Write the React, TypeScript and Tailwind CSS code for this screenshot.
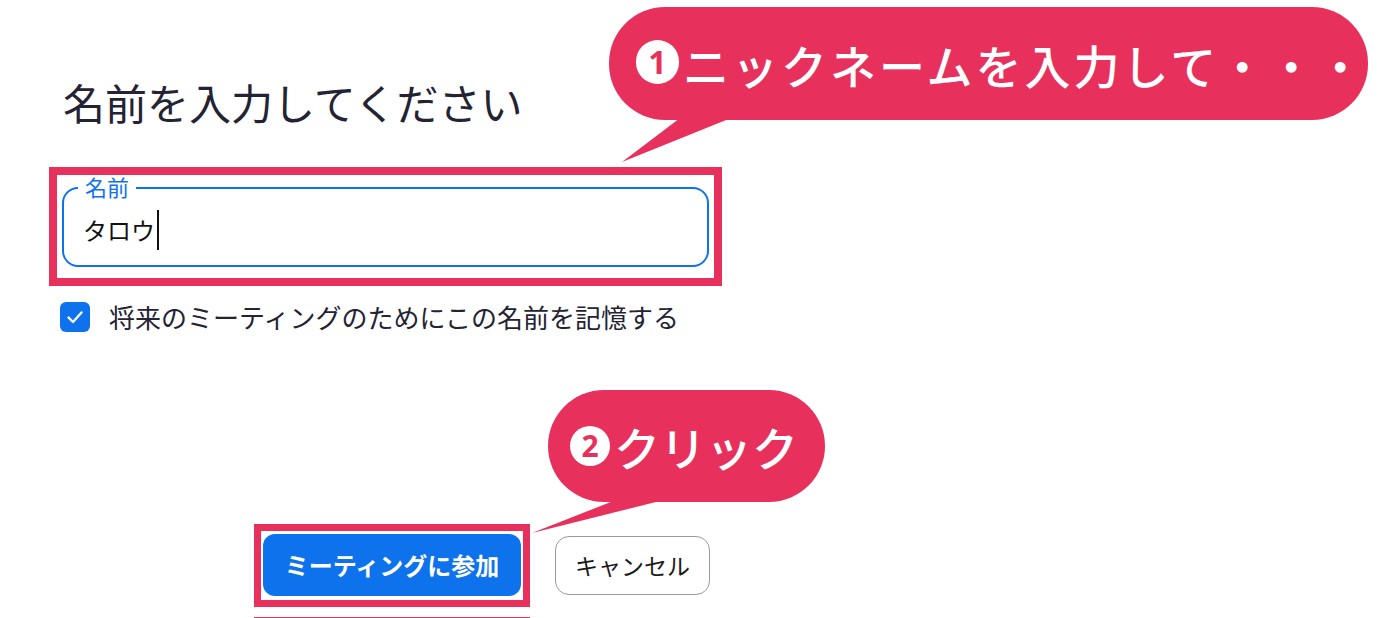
import React from "react";

const PINK = "#e8305c";

export default function App() {
  return (
    <div
      className="relative w-[1400px] h-[618px] overflow-hidden bg-white"
      style={{ fontFamily: '"Noto Sans CJK JP", "Noto Sans", sans-serif' }}
    >
      {/* main content flow */}
      <div className="flex flex-col pl-[49px] pt-[81px]">
        <h1 className="ml-[14px] text-[42px] leading-[42px] font-normal text-[#232333]">
          名前を入力してください
        </h1>

        {/* highlighted input */}
        <div className="mt-[44px] w-[673px] h-[119px] border-[8px] border-[#e8305c] px-[5px] pt-[12px]">
          <div className="relative h-[80px] rounded-[16px] border-2 border-[#0e72ed] flex items-center pl-[19px]">
            <span className="absolute left-[14px] top-[-14px] bg-white px-[7px] text-[22px] leading-[22px] text-[#0e72ed]">
              名前
            </span>
            <span className="mt-[6px] text-[24px] leading-[24px] text-[#111111]">タロウ</span>
            <span className="mt-[6px] ml-[2px] w-[1.5px] h-[40px] bg-[#111111]" />
          </div>
        </div>

        {/* remember checkbox */}
        <div className="mt-[16px] ml-[11px] flex items-center h-[30px]">
          <div className="w-[30px] h-[30px] rounded-[6px] bg-[#0e72ed] flex items-center justify-center">
            <svg width="30" height="30" viewBox="0 0 30 30">
              <polyline
                points="8.5,15.5 13,20 21.5,10.5"
                fill="none"
                stroke="white"
                strokeWidth="2.4"
                strokeLinecap="round"
                strokeLinejoin="round"
              />
            </svg>
          </div>
          <span className="ml-[19px] text-[26px] leading-[30px] text-[#232333]">
            将来のミーティングのためにこの名前を記憶する
          </span>
        </div>

        {/* buttons */}
        <div className="mt-[192px] ml-[205px] flex items-center">
          <div className="w-[276px] h-[83px] border-[7px] border-[#e8305c] pl-[2px] pt-[3px]">
            <button className="w-[258px] h-[62px] rounded-[12px] bg-[#0e72ed] text-white text-[24px] font-bold leading-[24px] flex items-center justify-center">
              ミーティングに参加
            </button>
          </div>
          <button className="ml-[25px] w-[155px] h-[59px] rounded-[14px] border-[1.5px] border-[#9a9a9a] bg-white text-[23px] leading-[23px] text-[#1a1a1a] flex items-center justify-center">
            キャンセル
          </button>
        </div>
        <div className="mt-[10px] ml-[205px] w-[276px] h-[2px] bg-[#e8305c]" />
      </div>

      {/* annotation tails */}
      <svg className="absolute left-0 top-0" width="1400" height="618" viewBox="0 0 1400 618">
        <polygon points="688,112 622,162 746,112" fill={PINK} />
        <polygon points="626,496 532,533 680,496" fill={PINK} />
      </svg>

      {/* bubble 1 */}
      <div className="absolute left-[609px] top-[7px] w-[759px] h-[113px] rounded-[56px] bg-[#e8305c] flex items-center pl-[27px]">
        <span
          className="w-[43px] h-[44px] rounded-full bg-white flex items-center justify-center text-[#e8305c] text-[32px] font-bold leading-none -mt-[4px]"
          style={{ fontFamily: '"Noto Sans", sans-serif' }}
        >
          1
        </span>
        <span className="ml-[4px] text-white text-[46px] leading-[46px] font-medium tracking-[3px]">
          ニックネームを入力して・・・
        </span>
      </div>

      {/* bubble 2 */}
      <div className="absolute left-[548px] top-[390px] w-[277px] h-[112px] rounded-[56px] bg-[#e8305c] flex items-center pl-[22px]">
        <span
          className="w-[40px] h-[40px] rounded-full bg-white flex items-center justify-center text-[#e8305c] text-[30px] font-bold leading-none"
          style={{ fontFamily: '"Noto Sans", sans-serif' }}
        >
          2
        </span>
        <span className="ml-[4px] text-white text-[46px] leading-[46px] font-medium">
          クリック
        </span>
      </div>
    </div>
  );
}
